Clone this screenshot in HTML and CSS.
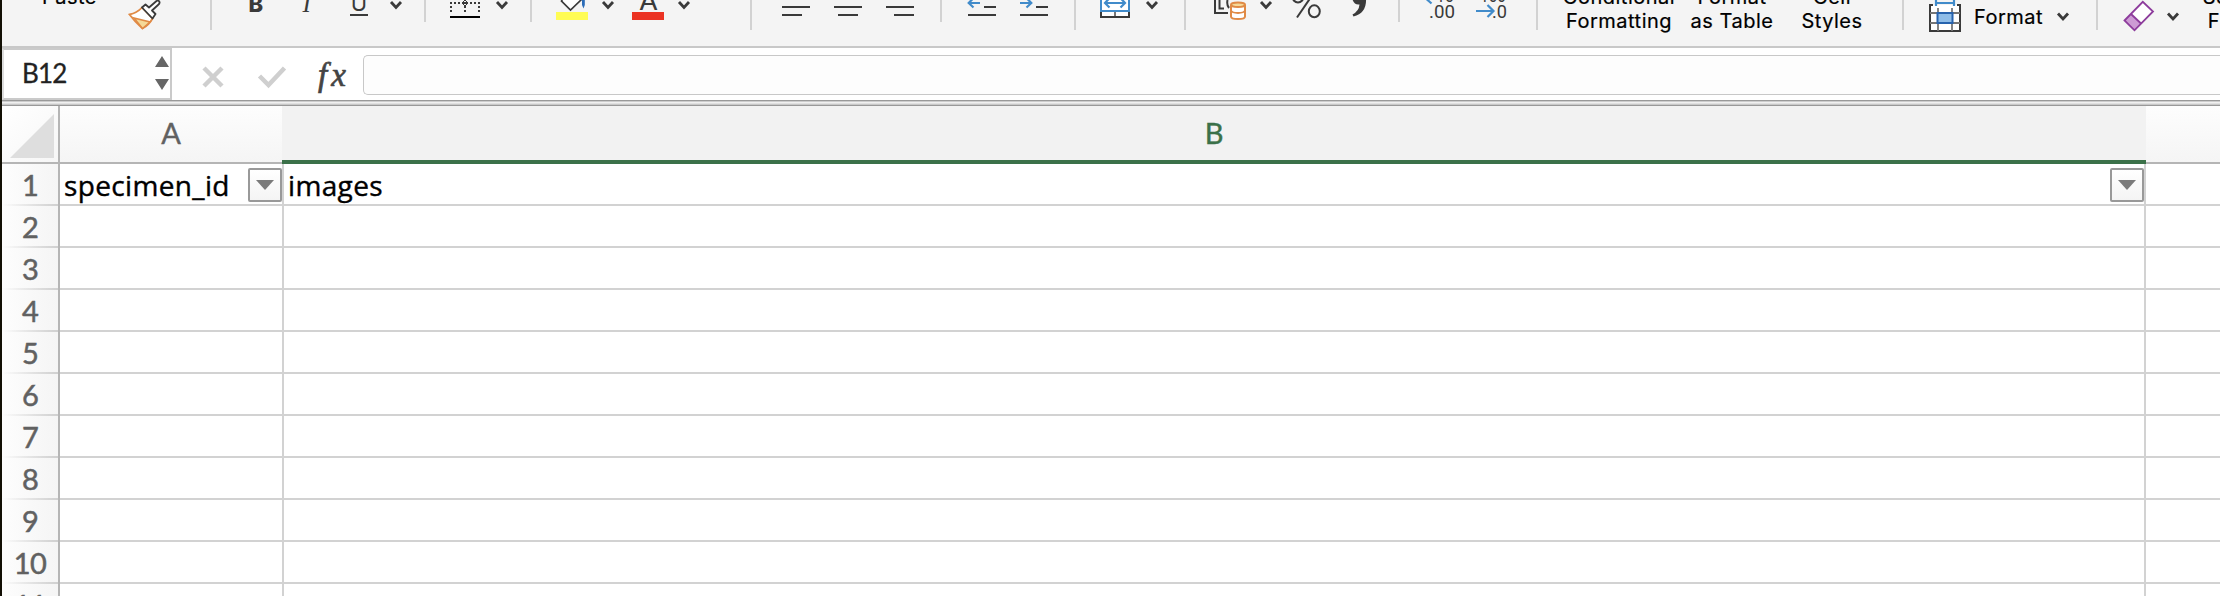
FILE: index.html
```
<!DOCTYPE html>
<html lang="en">
<head>
<meta charset="utf-8">
<title>Spreadsheet</title>
<link rel="stylesheet" href="styles.css">
</head>
<body>
<div class="window">
  <div class="ribbon">
    <div class="group clipboard">
      <span class="label paste">Paste</span>
      <svg width="48" height="46" viewBox="122 0 48 46">
        <path d="M129.500 14.500Q137 13 142 7.500L152.500 18.500Q149 25 142.500 28.500Q135 22 129.500 14.500Z" fill="#fff" stroke="#e08a45" stroke-width="1.800"/>
        <path d="M134 18L150 22L142.500 28.500Z" fill="#f5d998" stroke="#e08a45" stroke-width="1.500"/>
        <path d="M142 7.500L145.500 4.500L149 7.500L156.500 1Q158.500 0 159.500 2Q160 3.500 158 5L152 10.500L155.500 14L152.500 18.500Z" fill="#fff" stroke="#3a3a3a" stroke-width="1.800" stroke-linejoin="round"/>
      </svg>
    </div>
    <i class="sep"></i>
    <div class="group font-style">
      <svg width="212" height="46" viewBox="212 0 212 46">
        <text class="glyph bold" x="248.500" y="12" font-size="22">B</text>
        <text class="glyph italic" x="302.500" y="12" font-size="25">I</text>
        <text class="glyph" x="350.800" y="10.500" font-size="22">U</text>
        <path d="M350 15H368" class="ink"/>
        <path d="M391 2L396 7.500L401 2" class="chev"/>
      </svg>
    </div>
    <i class="sep short"></i>
    <div class="group">
      <svg width="104" height="46" viewBox="426 0 104 46">
        <path d="M451 0V14M479 0V14M465 0V14" class="dots" stroke-dashoffset="2"/>
        <path d="M450 3H480" class="dots"/>
        <path d="M465 0L468 3L465 6L462 3Z" fill="none" stroke="#3a3a3a"/>
        <path d="M450 17H480" stroke="#000" stroke-width="2"/>
        <path d="M497 2L502 7.500L507 2" class="chev"/>
      </svg>
    </div>
    <i class="sep short"></i>
    <div class="group">
      <svg width="218" height="46" viewBox="532 0 218 46">
        <path d="M563 -2L561.500 1L570.500 10L581 0V-3Z" fill="#fff" stroke="#3a3a3a" stroke-width="1.700"/>
        <path d="M580 -2L584.800 -1V5L583.500 8.500L582 5V1Z" fill="#2b6cb8"/>
        <path d="M556 12H588V20H556Z" fill="#fffc54"/>
        <path d="M603 2L608 7.500L613 2" class="chev"/>
        <text class="glyph" x="639" y="10" font-size="25" textLength="19" lengthAdjust="spacingAndGlyphs">A</text>
        <path d="M632 12H664V20H632Z" fill="#eb3323"/>
        <path d="M679 2L684 7.500L689 2" class="chev"/>
      </svg>
    </div>
    <i class="sep"></i>
    <div class="group">
      <svg width="188" height="46" viewBox="752 0 188 46">
        <path d="M782 7H810M782 15H802M834 7H862M838 15H858M886 7H914M894 15H914" class="ink"/>
      </svg>
    </div>
    <i class="sep short"></i>
    <div class="group">
      <svg width="132" height="46" viewBox="942 0 132 46">
        <path d="M984 7H996M968 15H996M1036 7H1048M1020 15H1048" class="ink"/>
        <path d="M980 3H969M973.500 -2L968.700 3L973.500 7.500M1020 3H1031M1026.500 -2L1031.300 3L1026.500 7.500" class="blue"/>
      </svg>
    </div>
    <i class="sep"></i>
    <div class="group">
      <svg width="108" height="46" viewBox="1076 0 108 46">
        <path d="M1101 12V17H1129V12" fill="#fff" stroke="#3a3a3a" stroke-width="2"/>
        <path d="M1115 12V16" stroke="#777" stroke-width="2"/>
        <path d="M1101 -2H1129V11H1101Z" fill="#fff" stroke="#418bca" stroke-width="2"/>
        <path d="M1105 3H1125M1109.500 -2L1105 3L1109.500 7.500M1120.500 -2L1125 3L1120.500 7.500" class="blue"/>
        <path d="M1147 2L1152 7.500L1157 2" class="chev"/>
      </svg>
    </div>
    <i class="sep"></i>
    <div class="group">
      <svg width="212" height="46" viewBox="1186 0 212 46">
        <path d="M1215 -1V13H1228" class="ink"/>
        <path d="M1219.500 0V8.500H1224M1227.500 0Q1226.500 5 1229 8" class="ink"/>
        <path d="M1231 5V16.500Q1231 19 1238 19Q1245 19 1245 16.500V5" fill="#fff" stroke="#e08a45" stroke-width="2"/>
        <ellipse cx="1238" cy="4.800" rx="7" ry="2.300" fill="#f5d998" stroke="#e08a45" stroke-width="2"/>
        <path d="M1231 10.500Q1232 13 1238 13Q1244 13 1245 10.500" fill="none" stroke="#e08a45" stroke-width="1.800"/>
        <path d="M1261 2L1266 7.500L1271 2" class="chev"/>
        <path d="M1297 17.500L1311 -3" fill="none" stroke="#3a3a3a" stroke-width="2"/>
        <ellipse cx="1314.300" cy="11.300" rx="5.500" ry="6" fill="none" stroke="#3a3a3a" stroke-width="2"/>
        <ellipse cx="1298" cy="-3.500" rx="5.500" ry="6" fill="none" stroke="#3a3a3a" stroke-width="2"/>
        <path d="M1352 -2H1366Q1367 13 1353.500 16.500L1352.500 14.500Q1359 11 1359.500 4.500Q1354 5.500 1352 -2Z" fill="#3a3a3a"/>
      </svg>
    </div>
    <i class="sep short"></i>
    <div class="group">
      <svg width="136" height="46" viewBox="1400 0 136 46">
        <path d="M1426.500 -1L1431.500 3.500" class="blue"/>
        <text class="narrow" x="1429" y="17.500" font-size="19" textLength="26" lengthAdjust="spacingAndGlyphs">.00</text>
        <text class="narrow" x="1436" y="1.500" font-size="19" textLength="18" lengthAdjust="spacingAndGlyphs">10</text>
        <path d="M1476 11H1493M1487.500 5L1493.500 11L1487.500 17" class="blue"/>
        <text class="narrow" x="1492" y="17.500" font-size="19" textLength="15" lengthAdjust="spacingAndGlyphs">.0</text>
        <text class="narrow" x="1480" y="1.500" font-size="19" textLength="26" lengthAdjust="spacingAndGlyphs">100</text>
      </svg>
    </div>
    <i class="sep"></i>
    <div class="group styles">
      <span class="label cond">Conditional<br>Formatting</span>
      <span class="label table">Format<br>as Table</span>
      <span class="label cell-styles">Cell<br>Styles</span>
    </div>
    <i class="sep"></i>
    <div class="group format">
      <svg width="70" height="46" viewBox="1904 0 70 46">
        <path d="M1930 5H1960V31H1930Z" fill="#fff"/>
        <path d="M1933 5H1930V31H1960V5H1957" class="ink"/>
        <path d="M1930 13H1960M1930 23H1960M1938 8V31M1952 8V31" stroke="#777" stroke-width="1.800"/>
        <path d="M1937.500 13H1952.500V23H1937.500Z" fill="#8fbde8" stroke="#2763ae" stroke-width="2"/>
        <path d="M1936 3H1954M1936 -1V6M1954 -1V6" class="blue"/>
      </svg>
      <span class="label">Format</span>
      <svg class="push" width="14" height="46" viewBox="2056 0 14 46"><path d="M2058 13.500L2063 19L2068 13.500" class="chev"/></svg>
    </div>
    <i class="sep"></i>
    <div class="group editing">
      <svg width="90" height="46" viewBox="2098 0 90 46">
        <path d="M2124.500 20.500L2142.800 1.800L2153 11.500L2134.500 30.300Z" fill="#fff"/>
        <path d="M2124.500 20.500L2131 14L2141 23.500L2134.500 30.300Z" fill="#cd9bd4"/>
        <path d="M2124.500 20.500L2142.800 1.800L2153 11.500L2134.500 30.300ZM2131 14L2141 23.500" fill="none" stroke="#8d3c9c" stroke-width="1.800"/>
        <path d="M2168 13.500L2173 19L2178 13.500" class="chev"/>
      </svg>
      <span class="label sort">Sort &amp;<br>Filter</span>
    </div>
  </div>

  <div class="formula-bar">
    <div class="name-box">
      <span>B12</span>
      <svg width="14" height="34" viewBox="0 0 14 34"><path d="M0 11L7 0L14 11ZM0 23H14L7 34Z" fill="#666"/></svg>
    </div>
    <svg class="actions" width="118" height="52" viewBox="172 48 118 52">
      <path d="M204 68L222 86M222 68L204 86" fill="none" stroke="#cfcfcf" stroke-width="4.500"/>
      <path d="M259.500 76L268.500 85L284.500 68" fill="none" stroke="#cfcfcf" stroke-width="4.500"/>
    </svg>
    <span class="fx"><span>f</span>x</span>
    <div class="input"></div>
  </div>
  <div class="divider"></div>

  <div class="sheet">
    <div class="corner"><svg width="44" height="44" viewBox="0 0 44 44"><path d="M44 0V44H0Z" fill="#dedede"/></svg></div>
    <div class="col">A</div>
    <div class="col selected">B</div>
    <div class="col last"></div>

    <div class="row">1</div>
    <div class="cell"><span>specimen_id</span><span class="filter"><svg width="18" height="10" viewBox="0 0 18 10"><path d="M0 0H18L9 10Z" fill="#7b7b7b"/></svg></span></div>
    <div class="cell"><span>images</span><span class="filter"><svg width="18" height="10" viewBox="0 0 18 10"><path d="M0 0H18L9 10Z" fill="#7b7b7b"/></svg></span></div>
    <div class="cell last"></div>

    <div class="row">2</div><div class="cell"></div><div class="cell"></div><div class="cell last"></div>
    <div class="row">3</div><div class="cell"></div><div class="cell"></div><div class="cell last"></div>
    <div class="row">4</div><div class="cell"></div><div class="cell"></div><div class="cell last"></div>
    <div class="row">5</div><div class="cell"></div><div class="cell"></div><div class="cell last"></div>
    <div class="row">6</div><div class="cell"></div><div class="cell"></div><div class="cell last"></div>
    <div class="row">7</div><div class="cell"></div><div class="cell"></div><div class="cell last"></div>
    <div class="row">8</div><div class="cell"></div><div class="cell"></div><div class="cell last"></div>
    <div class="row">9</div><div class="cell"></div><div class="cell"></div><div class="cell last"></div>
    <div class="row">10</div><div class="cell"></div><div class="cell"></div><div class="cell last"></div>
    <div class="row">11</div><div class="cell"></div><div class="cell"></div><div class="cell last"></div>
  </div>
</div>
</body>
</html>
```
FILE: styles.css
```
* { box-sizing: border-box; }
body {
  margin: 0;
  padding-left: 2px;
  height: 596px;
  overflow: hidden;
  background: #120f04;
  font-family: Inter, "Liberation Sans", sans-serif;
}
svg { display: block; flex: none; }
.window { width: 2218px; height: 596px; overflow: hidden; background: #fff; }

.ribbon {
  display: flex;
  height: 48px;
  overflow: hidden;
  background: #f4f4f4;
  border-bottom: 2px solid #c8c8c8;
}
.group { display: flex; flex: none; height: 46px; align-items: flex-end; }
.sep { flex: none; width: 2px; height: 30px; background: #d2d2d2; }
.sep.short { height: 22px; }
.label {
  flex: none;
  font-size: 20px;
  line-height: 24px;
  letter-spacing: 0.5px;
  text-align: center;
  white-space: nowrap;
  color: #000;
  padding-bottom: 13px;
  -webkit-text-stroke: 0.2px #000;
}
.clipboard { width: 208px; }
.paste { width: 120px; padding-bottom: 37px; padding-left: 15px; }
.styles { width: 364px; padding-left: 20px; }
.cond { width: 122px; }
.table { width: 104px; }
.cell-styles { width: 96px; }
.format { width: 192px; }
.format .label { padding-bottom: 17px; width: 70px; text-align: left; }
.push { margin-left: 12px; }
.editing { width: 122px; }
.sort { width: 90px; }

.ink { fill: none; stroke: #3a3a3a; stroke-width: 2; }
.blue { fill: none; stroke: #418bca; stroke-width: 2.2; }
.chev { fill: none; stroke: #3a3a3a; stroke-width: 2.8; }
.dots { fill: none; stroke: #3a3a3a; stroke-width: 2; stroke-dasharray: 2 2; }
.glyph { fill: #3a3a3a; font-family: Inter, sans-serif; }
.bold { font-weight: 800; }
.italic { font-family: "Liberation Serif", serif; font-style: italic; }
.narrow { fill: #3a3a3a; font-family: Roboto, sans-serif; }

.formula-bar { display: flex; height: 52px; background: #fff; }
.name-box {
  display: flex;
  flex: none;
  justify-content: space-between;
  width: 170px;
  height: 52px;
  padding: 6px 1px 0 18px;
  border: 2px solid #cacaca;
  border-left-color: #ddd;
  font: 26px/35px Lato, sans-serif;
  letter-spacing: -0.8px;
  color: #222;
  -webkit-text-stroke: 0.3px #222;
}
.fx {
  flex: none;
  width: 73px;
  padding-left: 28px;
  font: italic 33px/54px "Liberation Serif", serif;
  color: #444;
  -webkit-text-stroke: 0.7px #444;
}
.fx span { padding-right: 4px; }
.input {
  flex: 1;
  height: 40px;
  margin-top: 7px;
  background: #fdfdfd;
  border: 1px solid #c8c8c8;
  border-right: 0;
  border-radius: 5px 0 0 5px;
}
.divider {
  height: 6px;
  background: linear-gradient(#999 1px, #ccc 1px 2px, #f0f0f0 2px 3px, #e0e0e0 3px 4px, #c8c8c8 4px 5px, #999 5px);
}

.sheet {
  display: grid;
  grid-template-columns: 58px 224px 1862px 74px;
  grid-template-rows: 58px;
  grid-auto-rows: 42px;
  color: #000;
}
.corner {
  display: flex;
  justify-content: flex-end;
  padding: 8px 4px 0 0;
  background: linear-gradient(135deg, #fff, #f6f6f6);
  border-right: 2px solid #b5b5b5;
  border-bottom: 2px solid #b5b5b5;
}
.col {
  padding-right: 2px;
  background: linear-gradient(#d6d6d600, #d0d0d0) right / 2px 100% no-repeat, linear-gradient(#fdfdfd, #f5f5f5);
  border-bottom: 2px solid #b5b5b5;
  font: 29px/54px Lato, sans-serif;
  text-align: center;
  color: #616161;
  -webkit-text-stroke: 0.4px currentColor;
}
.col.selected {
  margin-left: -2px;
  padding: 0;
  background: #f2f2f2;
  border-bottom: 4px solid #3b7149;
  color: #3b7149;
}
.col.last { background: linear-gradient(#fdfdfd, #f5f5f5); }
.row {
  background: linear-gradient(90deg, #f4f4f400, #d0d0d0) bottom / 100% 2px no-repeat, linear-gradient(90deg, #fdfdfd, #f5f5f5);
  border-right: 2px solid #b5b5b5;
  font: 29px/42px Lato, sans-serif;
  text-align: center;
  letter-spacing: -0.6px;
  color: #616161;
  -webkit-text-stroke: 0.5px currentColor;
}
.cell {
  display: flex;
  justify-content: space-between;
  padding-left: 4px;
  border-right: 2px solid #d2d2d2;
  border-bottom: 2px solid #d2d2d2;
  font: 28px/42px "Open Sans", sans-serif;
  letter-spacing: 0.35px;
  -webkit-text-stroke: 0.4px #000;
}
.cell.last { border-right: 0; }
.filter {
  display: flex;
  align-items: center;
  justify-content: center;
  width: 34px;
  height: 34px;
  margin-top: 4px;
  border: 2px solid #999;
  border-radius: 2px;
  background: linear-gradient(#fff, #f4f4f4);
}
```
